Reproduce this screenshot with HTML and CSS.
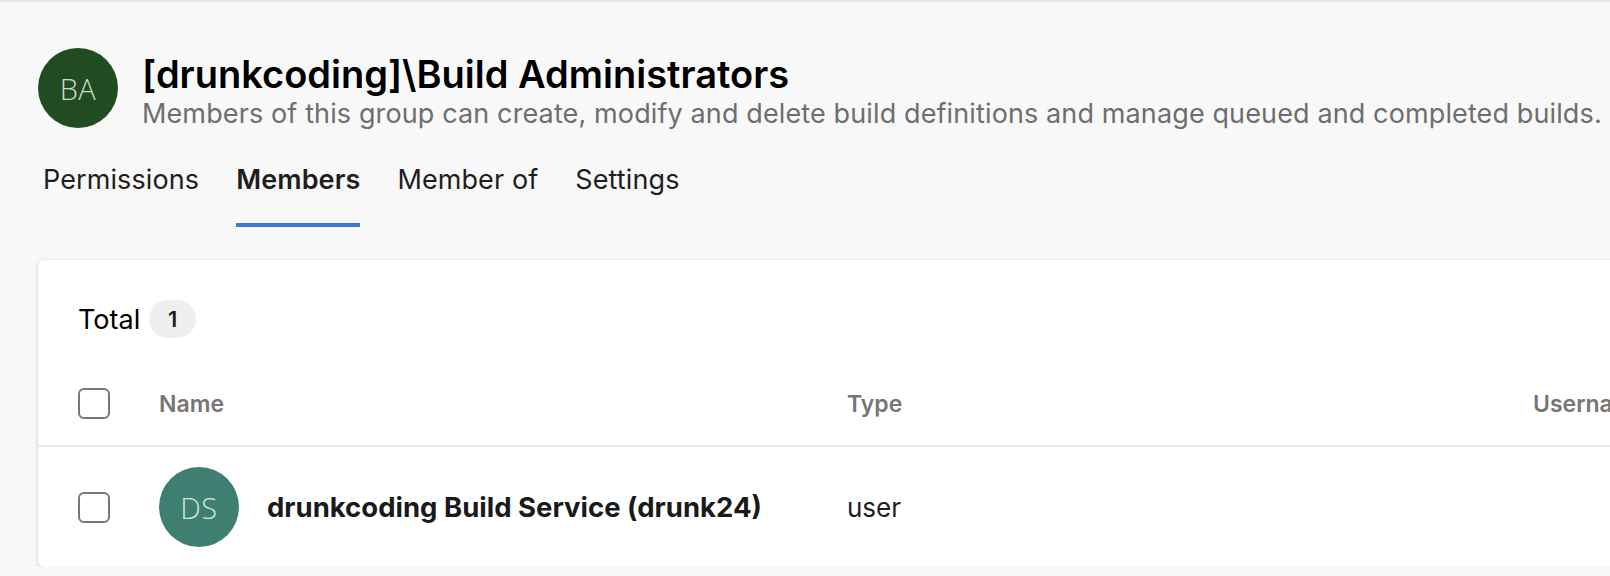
FILE: index.html
```html
<!DOCTYPE html>
<html>
<head>
<meta charset="utf-8">
<link rel="stylesheet" href="styles.css">
</head>
<body>
<div class="topline"></div>
<div class="page">
  <header class="header">
    <div class="avatar avatar-ba">BA</div>
    <div class="titles">
      <h1 class="title">[drunkcoding]\Build Administrators</h1>
      <div class="subtitle">Members of this group can create, modify and delete build definitions and manage queued and completed builds.</div>
    </div>
  </header>
  <nav class="tabs">
    <span class="tab">Permissions</span>
    <span class="tab active">Members</span>
    <span class="tab">Member of</span>
    <span class="tab">Settings</span>
  </nav>
  <section class="card">
    <div class="total">
      <span class="total-label">Total</span>
      <span class="badge">1</span>
    </div>
    <div class="grid head">
      <div class="cell"><span class="checkbox"></span></div>
      <div class="cell">Name</div>
      <div class="cell">Type</div>
      <div class="cell">Username</div>
    </div>
    <div class="grid row">
      <div class="cell"><span class="checkbox"></span></div>
      <div class="cell namecell"><div class="avatar avatar-ds">DS</div><span class="member-name">drunkcoding Build Service (drunk24)</span></div>
      <div class="cell">user</div>
      <div class="cell"></div>
    </div>
  </section>
</div>
</body>
</html>
```
FILE: styles.css
```css
html, body {
  margin: 0;
  padding: 0;
  overflow: hidden;
  background: #f8f8f8;
  font-family: Inter, "Noto Sans", sans-serif;
  color: #1e1e1e;
}
.topline {
  height: 2px;
  background: #e6e6e6;
}
.page {
  padding: 46px 0 0 38px;
}
.header {
  display: flex;
  align-items: flex-start;
  gap: 24px;
}
.avatar {
  width: 80px;
  height: 80px;
  border-radius: 50%;
  flex: none;
  display: flex;
  align-items: center;
  justify-content: center;
  font-family: "Open Sans", sans-serif;
  font-weight: 300;
  font-size: 29px;
  letter-spacing: 0.5px;
}
.avatar-ba {
  background: #214c22;
  color: #cddacd;
}
.avatar-ds {
  background: #3e7f71;
  color: #d3e6df;
}
.titles {
  display: flex;
  flex-direction: column;
  padding-top: 3px;
}
.title {
  margin: 0;
  font-size: 38px;
  line-height: 46px;
  font-weight: 600;
  color: #000;
}
.subtitle {
  font-size: 27px;
  line-height: 34px;
  color: #6e6e6e;
  letter-spacing: 0.12px;
}
.tabs {
  display: flex;
  gap: 37px;
  padding-left: 5px;
  margin-top: 29px;
}
.tab {
  font-size: 27px;
  line-height: 40px;
  padding-bottom: 23px;
  border-bottom: 4px solid transparent;
  color: #1e1e1e;
  letter-spacing: 0.1px;
}
.tab.active {
  font-weight: 600;
  border-bottom-color: #3b78d0;
}
.card {
  margin-top: 33px;
  width: 1640px;
  background: #fff;
  border-radius: 6px;
  box-shadow: 0 1px 4px rgba(0,0,0,0.18);
  padding-bottom: 20px;
}
.total {
  display: flex;
  align-items: center;
  gap: 9px;
  padding: 40px 0 0 40px;
}
.total-label {
  font-size: 27px;
  color: #000;
}
.badge {
  width: 47px;
  height: 38px;
  border-radius: 19px;
  background: #efefef;
  display: flex;
  align-items: center;
  justify-content: center;
  font-size: 22px;
  font-weight: 600;
}
.grid {
  display: grid;
  grid-template-columns: 81px 688px 686px 1fr;
  padding-left: 40px;
  align-items: center;
}
.head {
  margin-top: 50px;
  height: 57px;
  align-items: start;
  border-bottom: 2px solid #ebebeb;
  font-size: 23px;
  font-weight: 600;
  color: #767676;
}
.head .cell {
  line-height: 32px;
}
.checkbox {
  display: block;
  width: 28px;
  height: 27px;
  border: 2px solid #777;
  border-radius: 6px;
}
.row {
  padding-top: 20px;
  font-size: 26px;
}
.namecell {
  display: flex;
  align-items: center;
  gap: 28px;
}
.member-name {
  font-weight: 700;
  font-size: 27.5px;
  color: #1a1a1a;
}
```
